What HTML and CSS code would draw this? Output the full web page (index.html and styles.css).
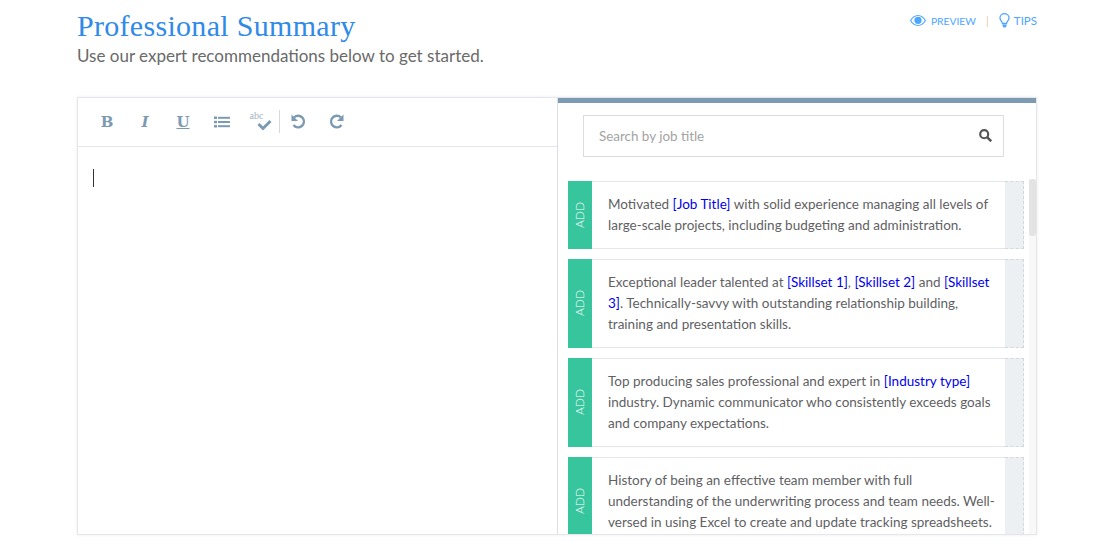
FILE: index.html
```html
<!DOCTYPE html>
<html lang="en">

<head>
	<meta charset="UTF-8">
	<title>Professional Summary</title>
	<link rel="stylesheet" href="styles.css">
</head>

<body>
	<div class="header">
		<div>
			<h1 class="title">Professional Summary</h1>
			<p class="subtitle">Use our expert recommendations below to get started.</p>
		</div>
		<div class="links">
			<svg class="icon-eye" viewBox="0 0 16 11" width="16" height="11">
				<path fill="#4da6ff" fill-rule="evenodd" d="M8 0C4.600 0 1.800 2.100 0 5.500 1.800 8.900 4.600 11 8 11s6.200-2.100 8-5.500C14.200 2.100 11.400 0 8 0zm0 1c2.700 0 5 1.700 6.700 4.500C13 8.300 10.700 10 8 10s-5-1.700-6.700-4.500C3 2.700 5.300 1 8 1z" />
				<circle cx="8" cy="5.300" r="3.600" fill="#4da6ff" />
			</svg>
			<span class="link link-preview">PREVIEW</span>
			<span class="sep">|</span>
			<svg class="icon-bulb" viewBox="0 0 11 15" width="11" height="15">
				<path fill="none" stroke="#4da6ff" stroke-width="1.300" d="M3.500 10.500C3.300 8.500 1 7.500 1 5a4.500 4.300 0 0 1 9 0c0 2.500-2.300 3.500-2.500 5.500z" />
				<path fill="#4da6ff" d="M3.500 11.500h4v1.500l-1 1.500h-2l-1-1.500z" />
			</svg>
			<span class="link">TIPS</span>
		</div>
	</div>

	<div class="panel">
		<div class="editor">
			<div class="toolbar">
				<span class="tool tool-b">B</span>
				<span class="tool tool-i">I</span>
				<span class="tool tool-u">U</span>
				<svg class="tool-svg" viewBox="0 0 16 12" width="16" height="12">
					<g fill="#7d9ab3">
						<rect x="0" y="0.500" width="3" height="2.500" />
						<rect x="0" y="4.800" width="3" height="2.500" />
						<rect x="0" y="9" width="3" height="2.500" />
						<rect x="4" y="0.800" width="12" height="2" />
						<rect x="4" y="5" width="12" height="2" />
						<rect x="4" y="9.200" width="12" height="2" />
					</g>
				</svg>
				<span class="spell">
					<span class="abc">abc</span>
					<svg viewBox="0 0 15 12" width="15" height="12">
						<path fill="none" stroke="#7d9ab3" stroke-width="3" d="M1.500 5l4.500 4.500 7.500-7.500" />
					</svg>
				</span>
				<span class="divider"></span>
				<svg class="tool-undo" viewBox="0 0 15 15" width="15" height="15">
					<path fill="none" stroke="#7d9ab3" stroke-width="2.300" d="M3 3.500a5.800 5.800 0 1 1-0.500 7.500" />
					<path fill="#7d9ab3" d="M0.500 0.500v6.500h6.500z" />
				</svg>
				<svg class="tool-redo" viewBox="0 0 15 15" width="15" height="15">
					<path fill="none" stroke="#7d9ab3" stroke-width="2.300" d="M12 3.500a5.800 5.800 0 1 0 0.500 7.500" />
					<path fill="#7d9ab3" d="M14.500 0.500v6.500h-6.500z" />
				</svg>
			</div>
			<div class="editor-body">
				<span class="caret"></span>
			</div>
		</div>

		<div class="tips">
			<div class="search">
				<span class="placeholder">Search by job title</span>
				<svg viewBox="0 0 12 12" width="13" height="13">
					<circle cx="4.800" cy="4.800" r="3.700" fill="none" stroke="#555" stroke-width="2" />
					<path stroke="#555" stroke-width="2.400" d="M7.500 7.500l3.800 3.800" />
				</svg>
			</div>
			<div class="list">
				<div class="card">
					<div class="add"><span>ADD</span></div>
					<div class="text">Motivated <span class="tag">[Job Title]</span> with solid experience managing all levels of<br>large-scale projects, including budgeting and administration.</div>
					<div class="grip"></div>
				</div>
				<div class="card">
					<div class="add"><span>ADD</span></div>
					<div class="text">Exceptional leader talented at <span class="tag">[Skillset 1]</span>, <span class="tag">[Skillset 2]</span> and <span class="tag">[Skillset<br>3]</span>. Technically-savvy with outstanding relationship building,<br>training and presentation skills.</div>
					<div class="grip"></div>
				</div>
				<div class="card">
					<div class="add"><span>ADD</span></div>
					<div class="text">Top producing sales professional and expert in <span class="tag">[Industry type]</span><br>industry. Dynamic communicator who consistently exceeds goals<br>and company expectations.</div>
					<div class="grip"></div>
				</div>
				<div class="card">
					<div class="add"><span>ADD</span></div>
					<div class="text">History of being an effective team member with full<br>understanding of the underwriting process and team needs. Well-<br>versed in using Excel to create and update tracking spreadsheets.</div>
					<div class="grip"></div>
				</div>
			</div>
			<div class="scrollbar">
				<div class="thumb"></div>
			</div>
		</div>
	</div>
</body>

</html>
```

FILE: styles.css
```css
:root {
	--blue: #2f8ae8;
	--link: #4da6ff;
	--slate: #7d9ab3;
	--green: #36c59d;
	--text: #5f5f64;
	--line: #e4e6ec;
}

* {
	box-sizing: border-box;
}

html,
body {
	height: 541px;
	overflow: hidden;
}

body {
	margin: 0;
	padding: 0 68px 6px 77px;
	font-family: 'Lato', sans-serif;
	background: white;
	color: var(--text);
}

.header {
	display: flex;
	justify-content: space-between;
	height: 97px;
}

.title {
	margin: 8px 0 0;
	font-family: 'Liberation Serif', serif;
	font-size: 30px;
	font-weight: 400;
	line-height: 36px;
	letter-spacing: .3px;
	color: var(--blue);
}

.subtitle {
	margin: 0;
	font-size: 17px;
	line-height: 23px;
	color: #6a6a6a;
}

.links {
	display: flex;
	align-items: center;
	height: 15px;
	margin-top: 13px;
	font-size: 11.500px;
	color: var(--link);
}

.link-preview {
	font-size: 10.300px;
}

.icon-eye {
	margin-right: 5px;
}

.icon-bulb {
	margin-right: 4px;
}

.sep {
	margin: 0 10px;
	color: #e8c9a8;
}

.panel {
	display: flex;
	height: 438px;
	border: 1px solid var(--line);
	box-shadow: 0 0 3px rgba(0, 0, 0, .08);
}

.editor {
	width: 480px;
	border-right: 1px solid #dcdee4;
}

.toolbar {
	display: flex;
	align-items: center;
	height: 49px;
	padding: 0 0 1px 22px;
	border-bottom: 1px solid var(--line);
	color: var(--slate);
}

.tool {
	width: 14px;
	text-align: center;
	font-family: 'DejaVu Serif', serif;
	font-size: 15px;
	font-weight: 700;
}

.tool-i {
	margin-left: 24px;
	font-style: italic;
}

.tool-u {
	margin-left: 24px;
	text-decoration: underline;
}

.tool-svg {
	margin-left: 23.500px;
}

.spell {
	position: relative;
	display: flex;
	width: 22px;
	height: 18px;
	margin-left: 20px;
	align-items: flex-end;
	justify-content: flex-end;
}

.abc {
	position: absolute;
	top: -3px;
	left: 0;
	font-family: 'Liberation Serif', serif;
	font-size: 10px;
	color: #9fb3c4;
}

.divider {
	width: 1px;
	height: 23px;
	margin: 0 11px 0 7px;
	background: #d8d8d8;
}

.tool-redo {
	margin-left: 23px;
}

.editor-body {
	padding: 22px 15px;
}

.caret {
	display: block;
	width: 1px;
	height: 18px;
	background: #333;
}

.tips {
	position: relative;
	flex: 1;
	overflow: hidden;
	border-top: 5px solid var(--slate);
}

.search {
	display: flex;
	align-items: center;
	justify-content: space-between;
	width: 421px;
	height: 42px;
	margin: 12px 0 0 25px;
	padding: 0 11px 1px 15px;
	border: 1px solid #dcdcdc;
}

.placeholder {
	font-size: 13.400px;
	color: #a3a3a3;
}

.list {
	margin: 24px 0 0 10px;
	width: 456px;
}

.card {
	display: flex;
	margin-bottom: 10px;
}

.add {
	display: flex;
	flex: none;
	align-items: center;
	justify-content: center;
	width: 24px;
	padding-right: 2px;
	background: var(--green);
	color: white;
	font-size: 12px;
	font-weight: 300;
}

.add span {
	writing-mode: vertical-rl;
	transform: rotate(180deg);
}

.text {
	flex: 1;
	min-width: 0;
	padding: 12px 0 12px 16px;
	font-size: 13.500px;
	line-height: 21px;
	white-space: nowrap;
	border-top: 1px solid var(--line);
	border-bottom: 1px solid var(--line);
}

.tag {
	color: #0000ee;
}

.grip {
	flex: none;
	width: 19px;
	background: #edf0f3;
	border: 1px dashed #d4d8dd;
	border-left: 0;
}

.scrollbar {
	position: absolute;
	top: 76px;
	bottom: 0;
	right: 0;
	width: 7px;
	background: #f8f8f8;
}

.thumb {
	height: 57px;
	background: #e3e3e3;
	border-radius: 3px;
}
```
